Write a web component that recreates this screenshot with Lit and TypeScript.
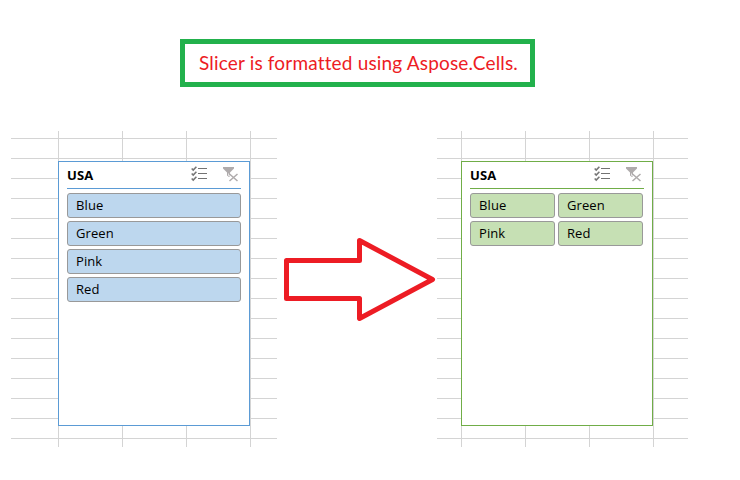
import { LitElement, html, css } from "lit";
import { customElement, property } from "lit/decorators.js";
import { classMap } from "lit/directives/class-map.js";

@customElement("slicer-panel")
class SlicerPanel extends LitElement {
  @property() theme = "blue";
  @property() caption = "";
  @property({ type: Array }) items: string[] = [];

  static styles = css`
    :host { display: block; font-family: "Open Sans", "Noto Sans", sans-serif; font-size: 13px; color: #000; }
    .panel { box-sizing: border-box; width: 192px; height: 265px; padding: 0 8px; background: #fff; border: 1px solid var(--line); }
    .blue { --line: #5b9bd5; --fill: #bdd7ee; }
    .green { --line: #70ad47; --fill: #c6e0b4; }
    header { display: flex; height: 26px; border-bottom: 1px solid var(--line); }
    .caption { flex: 1; font-weight: 700; line-height: 27px; letter-spacing: 0.1px; }
    svg { display: block; flex: none; margin-top: 4px; }
    .multi { margin-right: 15px; }
    .items { display: grid; gap: 3px; padding-top: 4px; }
    .green .items { grid-template-columns: 85px 85px; }
    .item { box-sizing: border-box; height: 25px; border: 1px solid #999; border-radius: 3px; background: var(--fill); padding-left: 8px; line-height: 23px; letter-spacing: 0.1px; }
  `;

  render() {
    return html`
      <section class=${classMap({ panel: true, [this.theme]: true })}>
        <header>
          <span class="caption">${this.caption}</span>
          <svg class="multi" width="17" height="16" viewBox="0 0 17 16" fill="none">
            <path d="M.7 2.5 2.2 4 5.4.7M.7 7.5 2.2 9 5.4 5.7M.7 12.5 2.2 14 5.4 10.7" stroke="#777" stroke-width="1.6" />
            <path d="M7 2.5h9M7 7.5h9M7 12.5h9" stroke="#737373" />
          </svg>
          <svg width="18" height="16" viewBox="0 0 18 16" fill="none">
            <path d="M0 1H11V2.5L7 6.5V11H6L4 9.5V6.5L0 2.5Z" fill="#afabac" />
            <path d="M5.5 7.5V9.5L7 10.5" stroke="#fff" stroke-width=".7" />
            <path d="M7 8.5 14.5 15M14.5 8.5 6.5 15" stroke="#fff" stroke-width="2.6" />
            <path d="M6.5 8 14.5 15M14.5 8 6.5 15" stroke="#afabac" stroke-width="1.5" />
          </svg>
        </header>
        <div class="items">${this.items.map((i) => html`<div class="item">${i}</div>`)}</div>
      </section>
    `;
  }
}

@customElement("app-root")
class AppRoot extends LitElement {
  static styles = css`
    :host { display: flow-root; width: 740px; height: 480px; overflow: hidden; background: #fff; }
    .title { box-sizing: border-box; width: 355px; height: 48px; margin: 39px 0 0 180px; border: 5px solid #22b14c; padding-left: 14px;
      font: 19px/38px Lato, "Open Sans", sans-serif; letter-spacing: 0.17px; font-variant-ligatures: none; color: #ed1c24; white-space: nowrap; }
    .row { display: flex; margin: 44px 0 0 11px; align-items: flex-start; }
    .sheet { box-sizing: border-box; height: 316px; padding-top: 30px;
      background-image: linear-gradient(to bottom, #d4d4d4 1px, transparent 1px), linear-gradient(to right, #d4d4d4 1px, transparent 1px);
      background-size: 100% 20px, 64px 100%; background-repeat: repeat-y, repeat-x; }
    .before { width: 266px; padding-left: 47px; background-position: 0 7px, 47px 0; }
    .after { width: 251px; padding-left: 24px; background-position: 0 7px, 24px 0; }
    .arrow { flex: none; width: 160px; height: 90px; margin-top: 102px; }
  `;

  render() {
    const items = ["Blue", "Green", "Pink", "Red"];
    return html`
      <div class="title">Slicer is formatted using Aspose.Cells.</div>
      <div class="row">
        <div class="sheet before"><slicer-panel theme="blue" caption="USA" .items=${items}></slicer-panel></div>
        <svg class="arrow" viewBox="277 233 160 90">
          <path d="M286.5 260.5H359.5V240.5L432.5 279.5 359.5 318.5V298.5H286.5Z" fill="#fff" stroke="#ed1c24" stroke-width="5" stroke-linejoin="round" />
        </svg>
        <div class="sheet after"><slicer-panel theme="green" caption="USA" .items=${items}></slicer-panel></div>
      </div>
    `;
  }
}
